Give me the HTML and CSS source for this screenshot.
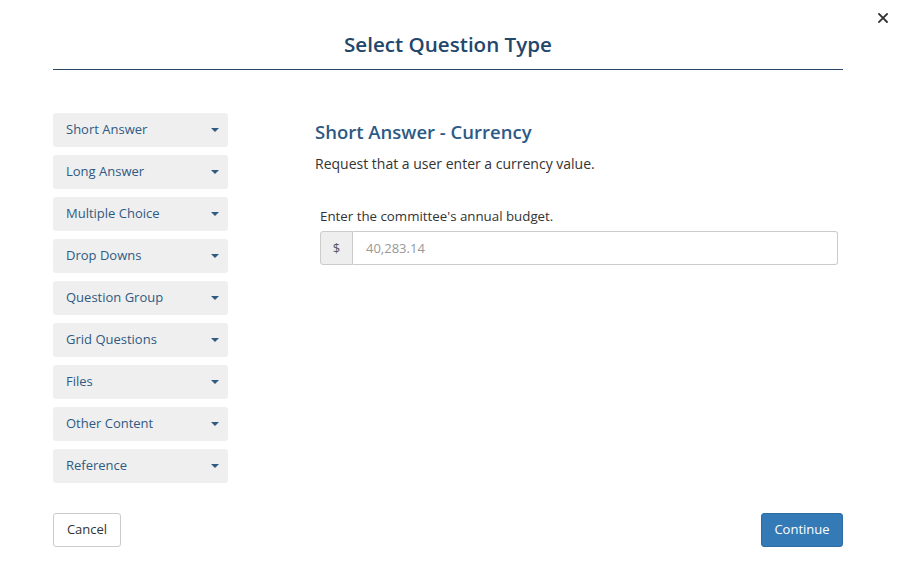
FILE: index.html
```html
<!DOCTYPE html>
<html>
<head>
<meta charset="utf-8">
<link rel="stylesheet" href="styles.css">
</head>
<body>
<div class="modal">
  <button class="close" aria-label="Close">
    <svg width="10" height="10" viewBox="0 0 10 10"><path d="M1 1L9 9M9 1L1 9" stroke="#333" stroke-width="1.8" stroke-linecap="square"/></svg>
  </button>
  <header class="head">
    <h1 class="title">Select Question Type</h1>
  </header>
  <div class="body">
    <nav class="types">
      <div class="type"><span>Short Answer</span><i class="caret"></i></div>
      <div class="type"><span>Long Answer</span><i class="caret"></i></div>
      <div class="type"><span>Multiple Choice</span><i class="caret"></i></div>
      <div class="type"><span>Drop Downs</span><i class="caret"></i></div>
      <div class="type"><span>Question Group</span><i class="caret"></i></div>
      <div class="type"><span>Grid Questions</span><i class="caret"></i></div>
      <div class="type"><span>Files</span><i class="caret"></i></div>
      <div class="type"><span>Other Content</span><i class="caret"></i></div>
      <div class="type"><span>Reference</span><i class="caret"></i></div>
    </nav>
    <section class="preview">
      <h2 class="ptitle">Short Answer - Currency</h2>
      <p class="pdesc">Request that a user enter a currency value.</p>
      <div class="sample">
        <label class="label">Enter the committee's annual budget.</label>
        <div class="igroup">
          <span class="addon">$</span>
          <input class="input" type="text" placeholder="40,283.14">
        </div>
      </div>
    </section>
  </div>
  <footer class="foot">
    <button class="btn btn-default">Cancel</button>
    <button class="btn btn-primary">Continue</button>
  </footer>
</div>
</body>
</html>
```

FILE: styles.css
```css
* { box-sizing: border-box; }
html, body { margin: 0; padding: 0; background: #fff; }
body {
  font-family: "Open Sans", "Lato", sans-serif;
  color: #333;
  width: 898px;
  height: 582px;
  overflow: hidden;
}
.modal {
  position: relative;
  padding: 0 55px 0 53px;
}
.close {
  position: absolute;
  top: 13px;
  right: 10px;
  border: 0;
  background: none;
  padding: 0;
  width: 10px;
  height: 10px;
  display: flex;
}
.head {
  height: 70px;
  border-bottom: 1px solid #2a4766;
  display: flex;
  align-items: flex-end;
  justify-content: center;
  padding-bottom: 12px;
}
.title {
  margin: 0;
  font-size: 20.6px;
  font-weight: 600;
  color: #23466b;
  line-height: 26px;
}
.body {
  display: flex;
  margin-top: 43px;
  height: 370px;
}
.types {
  width: 175px;
  display: flex;
  flex-direction: column;
  gap: 8px;
}
.type {
  height: 34px;
  background: #efefef;
  border-radius: 3px;
  display: flex;
  align-items: center;
  justify-content: space-between;
  padding: 0 9px 2px 13px;
  font-size: 13px;
  color: #2f5a82;
  line-height: 16px;
}
.caret {
  width: 0;
  height: 0;
  border-left: 4px solid transparent;
  border-right: 4px solid transparent;
  border-top: 4px solid #2f5a82;
  margin-top: 2px;
}
.preview {
  flex: 1;
  padding-left: 87px;
}
.ptitle {
  margin: 8px 0 0;
  font-size: 18.5px;
  font-weight: 600;
  color: #2d5a84;
  line-height: 22px;
}
.pdesc {
  margin: 12px 0 0;
  font-size: 14px;
  color: #333;
  line-height: 18px;
}
.sample {
  margin-top: 35px;
  padding-left: 5px;
}
.label {
  display: block;
  font-size: 13.3px;
  color: #333;
  line-height: 16px;
  margin-bottom: 7px;
}
.igroup {
  display: flex;
  width: 518px;
  height: 34px;
}
.addon {
  width: 33px;
  background: #eee;
  border: 1px solid #ccc;
  border-radius: 3px 0 0 3px;
  display: flex;
  align-items: center;
  justify-content: center;
  font-size: 13px;
  color: #555;
}
.input {
  flex: 1;
  border: 1px solid #ccc;
  border-left: 0;
  border-radius: 0 3px 3px 0;
  padding: 0 13px;
  font-family: inherit;
  font-size: 13px;
  color: #555;
  outline: none;
}
.input::placeholder { color: #999; }
.foot {
  display: flex;
  justify-content: space-between;
  margin-top: 30px;
}
.btn {
  height: 34px;
  font-family: inherit;
  font-size: 13px;
  border-radius: 3px;
  padding: 0 8px 2px;
}
.btn-default {
  background: #fff;
  border: 1px solid #ccc;
  color: #333;
  width: 68px;
}
.btn-primary {
  background: #337ab7;
  border: 1px solid #2e6da4;
  color: #fff;
  width: 82px;
}
```
